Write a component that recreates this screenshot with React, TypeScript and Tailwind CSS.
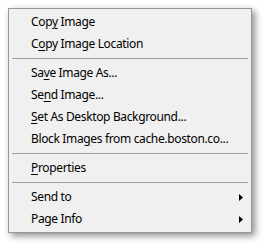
import React from "react";

type Item =
  | { type: "sep" }
  | { type: "item"; before: string; key?: string; after?: string; sub?: boolean };

const items: Item[] = [
  { type: "item", before: "Cop", key: "y", after: " Image" },
  { type: "item", before: "C", key: "o", after: "py Image Location" },
  { type: "sep" },
  { type: "item", before: "Sa", key: "v", after: "e Image As..." },
  { type: "item", before: "Se", key: "n", after: "d Image..." },
  { type: "item", before: "", key: "S", after: "et As Desktop Background..." },
  { type: "item", before: "Block Ima", key: "g", after: "es from cache.boston.co..." },
  { type: "sep" },
  { type: "item", before: "", key: "P", after: "roperties" },
  { type: "sep" },
  { type: "item", before: "Send to", sub: true },
  { type: "item", before: "Page Info", sub: true },
];

function Arrow() {
  return (
    <svg width="4" height="7" viewBox="0 0 4 7" className="mr-[8px]">
      <path d="M0 0 L4 3.5 L0 7 Z" fill="#000" />
    </svg>
  );
}

export default function App() {
  return (
    <div className="w-[268px] h-[245px] bg-white pt-[8px] pl-[8px]">
      <div
        className="w-[244px] border border-[#979797] bg-[#f0f0f0] py-[2px] shadow-[3px_3px_7px_rgba(0,0,0,0.45)] text-[12px] tracking-[-0.35px] text-black"
        style={{ fontFamily: '"Noto Sans", "Open Sans", sans-serif' }}
      >
        {items.map((it, i) =>
          it.type === "sep" ? (
            <div key={i} className="h-[7px] flex items-center px-[3px]">
              <div className="h-px w-full bg-[#a0a0a0]" />
            </div>
          ) : (
            <div key={i} className="h-[22px] flex items-center justify-between pl-[22px]">
              <span className="leading-none">
                {it.before}
                {it.key && <span className="underline underline-offset-2">{it.key}</span>}
                {it.after}
              </span>
              {it.sub && <Arrow />}
            </div>
          )
        )}
      </div>
    </div>
  );
}
